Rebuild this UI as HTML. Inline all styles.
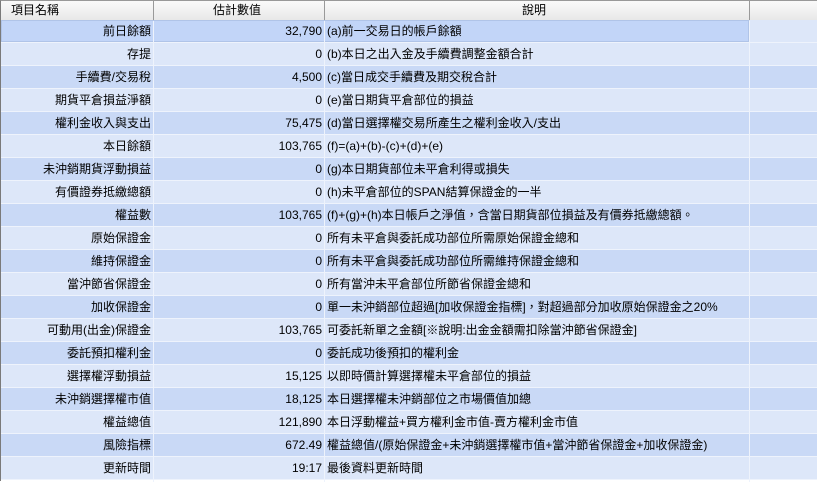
<!DOCTYPE html><html><head><meta charset="utf-8"><style>
body{margin:0;width:817px;height:481px;overflow:hidden;background:#fff;font-family:"Liberation Sans","Noto Sans CJK TC",sans-serif;font-size:12px;color:#000}
.w{position:absolute;left:0;top:0;width:817px;height:481px;border-left:1px solid #7a7a7a;border-top:1px solid #999;box-sizing:border-box}
.h{position:absolute;left:0;top:0;width:817px;height:19px;background:linear-gradient(#fafafa,#e8e8e8);border-bottom:1px solid #a0a0a0}
.h div{position:absolute;top:0;height:19px;line-height:19px}
.s{position:absolute;top:4px;width:1px;height:11px;background:#999}
.r{position:absolute;left:0;width:817px;height:22px;border-bottom:1px solid #eef3fc;line-height:22px}
.r.d{background:#c9d9f6}.r.l{background:#dde7f9}
.r div{position:absolute;top:0;height:22px}
.a{left:0;width:150px;text-align:right}
.b{left:152px;width:169px;text-align:right}
.c{left:326px;white-space:nowrap}
.v{position:absolute;top:20px;width:1px;height:461px;background:#eef3fc}
</style></head><body><div class="w">
<div class="h"><div style="left:10px">項目名稱</div><div style="left:212px">估計數值</div><div style="left:521px">說明</div>
<div class="s" style="left:152px"></div><div class="s" style="left:323px"></div><div class="s" style="left:748px"></div></div>
<div style="position:absolute;top:19px;left:0">
<div class="r l" style="top:0"><div style="left:0;width:748px;background:#c2d5f8;box-shadow:inset 0 0 0 1px #b0c4e8"></div><div class="a">前日餘額</div><div class="b">32,790</div><div class="c">(a)前一交易日的帳戶餘額</div></div>
<div class="r l" style="top:23px"><div class="a">存提</div><div class="b">0</div><div class="c">(b)本日之出入金及手續費調整金額合計</div></div>
<div class="r d" style="top:46px"><div class="a">手續費/交易稅</div><div class="b">4,500</div><div class="c">(c)當日成交手續費及期交稅合計</div></div>
<div class="r l" style="top:69px"><div class="a">期貨平倉損益淨額</div><div class="b">0</div><div class="c">(e)當日期貨平倉部位的損益</div></div>
<div class="r d" style="top:92px"><div class="a">權利金收入與支出</div><div class="b">75,475</div><div class="c">(d)當日選擇權交易所產生之權利金收入/支出</div></div>
<div class="r l" style="top:115px"><div class="a">本日餘額</div><div class="b">103,765</div><div class="c">(f)=(a)+(b)-(c)+(d)+(e)</div></div>
<div class="r d" style="top:138px"><div class="a">未沖銷期貨浮動損益</div><div class="b">0</div><div class="c">(g)本日期貨部位未平倉利得或損失</div></div>
<div class="r l" style="top:161px"><div class="a">有價證券抵繳總額</div><div class="b">0</div><div class="c">(h)未平倉部位的SPAN結算保證金的一半</div></div>
<div class="r d" style="top:184px"><div class="a">權益數</div><div class="b">103,765</div><div class="c">(f)+(g)+(h)本日帳戶之淨值，含當日期貨部位損益及有價券抵繳總額。</div></div>
<div class="r l" style="top:207px"><div class="a">原始保證金</div><div class="b">0</div><div class="c">所有未平倉與委託成功部位所需原始保證金總和</div></div>
<div class="r d" style="top:230px"><div class="a">維持保證金</div><div class="b">0</div><div class="c">所有未平倉與委託成功部位所需維持保證金總和</div></div>
<div class="r l" style="top:253px"><div class="a">當沖節省保證金</div><div class="b">0</div><div class="c">所有當沖未平倉部位所節省保證金總和</div></div>
<div class="r d" style="top:276px"><div class="a">加收保證金</div><div class="b">0</div><div class="c">單一未沖銷部位超過[加收保證金指標]，對超過部分加收原始保證金之20%</div></div>
<div class="r l" style="top:299px"><div class="a">可動用(出金)保證金</div><div class="b">103,765</div><div class="c">可委託新單之金額[※說明:出金金額需扣除當沖節省保證金]</div></div>
<div class="r d" style="top:322px"><div class="a">委託預扣權利金</div><div class="b">0</div><div class="c">委託成功後預扣的權利金</div></div>
<div class="r l" style="top:345px"><div class="a">選擇權浮動損益</div><div class="b">15,125</div><div class="c">以即時價計算選擇權未平倉部位的損益</div></div>
<div class="r d" style="top:368px"><div class="a">未沖銷選擇權市值</div><div class="b">18,125</div><div class="c">本日選擇權未沖銷部位之市場價值加總</div></div>
<div class="r l" style="top:391px"><div class="a">權益總值</div><div class="b">121,890</div><div class="c">本日浮動權益+買方權利金市值-賣方權利金市值</div></div>
<div class="r d" style="top:414px"><div class="a">風險指標</div><div class="b">672.49</div><div class="c">權益總值/(原始保證金+未沖銷選擇權市值+當沖節省保證金+加收保證金)</div></div>
<div class="r l" style="top:437px"><div class="a">更新時間</div><div class="b">19:17</div><div class="c">最後資料更新時間</div></div>
</div>
<div class="v" style="left:152px"></div><div class="v" style="left:323px"></div><div class="v" style="left:748px"></div>
</div></body></html>
